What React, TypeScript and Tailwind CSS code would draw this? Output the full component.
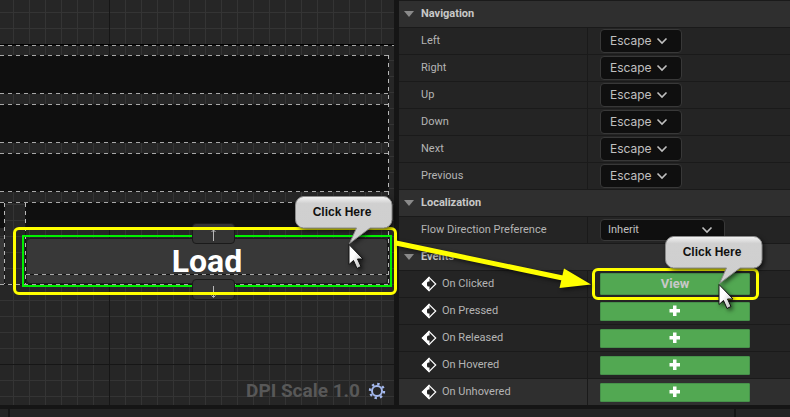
import React from "react";

const dashX =
  "h-px shrink-0 bg-[repeating-linear-gradient(90deg,#a8a8a8_0_4px,#141414_4px_8px)]";
const dashY =
  "w-px shrink-0 bg-[repeating-linear-gradient(180deg,#b8b8b8_0_4px,#141414_4px_8px)]";

const navigation = ["Left", "Right", "Up", "Down", "Next", "Previous"];
const events = ["On Clicked", "On Pressed", "On Released", "On Hovered", "On Unhovered"];

function Chevron() {
  return (
    <svg viewBox="0 0 12 8" className="pointer-events-none h-2 w-3 fill-none stroke-[#c0c0c0] stroke-[1.6]">
      <path d="M1.500 1.500 6 6l4.500-4.500" />
    </svg>
  );
}

function SectionHeader({ title }: { title: string }) {
  return (
    <button
      type="button"
      className="flex h-[27px] w-full items-center gap-[7px] border-b border-[#1a1a1a] bg-[#2f2f2f] pl-[5px] text-left font-bold text-[#c8c8c8]"
    >
      <svg viewBox="0 0 10 6" className="h-1.5 w-2.5 fill-[#8a8a8a]">
        <path d="M0 0h10L5 6z" />
      </svg>
      <span>{title}</span>
    </button>
  );
}

function NavigationRow({ name }: { name: string }) {
  const id = "nav-" + name.toLowerCase();
  return (
    <div className="flex h-[27px] border-b border-[#1a1a1a] bg-[#242424]">
      <label htmlFor={id} className="flex w-[189px] items-center border-r border-[#1a1a1a] pl-[22px]">
        {name}
      </label>
      <div className="flex flex-1 items-center pl-3">
        <div className="grid w-[82px] items-center">
          <select
            id={id}
            className="col-start-1 row-start-1 h-6 appearance-none rounded border border-[#383838] bg-[#0f0f0f] pl-[9px] font-['Inter',sans-serif] text-[12px] text-[#c0c0c0]"
          >
            <option>Escape</option>
          </select>
          <div className="pointer-events-none col-start-1 row-start-1 justify-self-end pr-[14px]">
            <Chevron />
          </div>
        </div>
      </div>
    </div>
  );
}

function EventIcon() {
  return (
    <svg viewBox="0 0 16 16" className="size-4">
      <path d="M8 1.300 14.700 8 8 14.700 1.300 8z" fill="#242424" stroke="#fff" strokeWidth="1.200" />
      <path d="M8.500.500 1 8l7.500 7.500V10.500H7.500a1.500 1.500 0 0 1-1.500-1.500V7a1.500 1.500 0 0 1 1.500-1.500h1z" fill="#fff" />
    </svg>
  );
}

function EventRow({ name, bound, last }: { name: string; bound: boolean; last: boolean }) {
  return (
    <div className={last ? "flex h-[26px] bg-[#2f2f2f]" : "flex h-[27px] border-b border-[#1a1a1a] bg-[#242424]"}>
      <div className="flex w-[189px] items-center gap-[5px] border-r border-[#1a1a1a] pl-[22px]">
        <EventIcon />
        <span>{name}</span>
      </div>
      <div className="flex flex-1 items-center pl-3">
        <button
          type="button"
          aria-label={(bound ? "View " : "Add ") + name}
          className={
            bound
              ? "flex h-[22px] w-[150px] items-center justify-center rounded-[1px] border border-[#46914a] bg-[#52a852] text-[13px] font-bold text-[#c8c8c8]"
              : "flex h-[19px] w-[150px] items-center justify-center rounded-[1px] border border-[#46914a] bg-[#52a852]"
          }
        >
          {bound ? (
            "View"
          ) : (
            <svg viewBox="0 0 12 12" className="size-3 fill-white">
              <path d="M4 .500h3.500V4H11v3.500H7.500V11H4V7.500H.500V4H4z" />
            </svg>
          )}
        </button>
      </div>
    </div>
  );
}

function DetailsPanel() {
  return (
    <section className="border-t border-[#1a1a1a] font-['Roboto',sans-serif] text-[11px] text-[#b4b4b4]">
      <SectionHeader title="Navigation" />
      {navigation.map((n) => (
        <NavigationRow key={n} name={n} />
      ))}
      <SectionHeader title="Localization" />
      <div className="flex h-[27px] border-b border-[#1a1a1a] bg-[#242424]">
        <label htmlFor="flow" className="flex w-[189px] items-center border-r border-[#1a1a1a] pl-[22px]">
          Flow Direction Preference
        </label>
        <div className="flex flex-1 items-center pl-3">
          <div className="grid w-[125px] items-center">
            <select
              id="flow"
              className="col-start-1 row-start-1 h-[22px] appearance-none rounded border border-[#383838] bg-[#0f0f0f] pl-[7px] text-[#c0c0c0]"
            >
              <option>Inherit</option>
            </select>
            <div className="pointer-events-none col-start-1 row-start-1 justify-self-end pr-3">
              <Chevron />
            </div>
          </div>
        </div>
      </div>
      <SectionHeader title="Events" />
      {events.map((n, i) => (
        <EventRow key={n} name={n} bound={i === 0} last={i === events.length - 1} />
      ))}
    </section>
  );
}

function Slot() {
  return (
    <div className="flex h-[39px] flex-col justify-between bg-[#0f0f0f]">
      <div className={dashX} />
      <div className={dashX} />
    </div>
  );
}

function MoveButton({ label, down }: { label: string; down: boolean }) {
  return (
    <button
      type="button"
      aria-label={label}
      className="flex h-[21px] w-[43px] items-center justify-center rounded border border-[#1a1a1a] bg-[#343434]"
    >
      <svg viewBox="0 0 9 18" className="h-[18px] w-[9px] fill-none stroke-[#b8b8b8]">
        {down ? <path d="M4.500 5v11M2.500 14.500l2 2 2-2" /> : <path d="M4.500 16V5M2.500 7l2-2 2 2" />}
      </svg>
    </button>
  );
}

function LoadWidget() {
  return (
    <div className="relative flex h-[46px]">
      <button
        type="button"
        className="flex flex-1 items-center justify-center rounded-sm border border-[#1c1c1c] bg-[#383838] text-[32px] font-bold text-white"
      >
        Load
      </button>
      <div className={dashX + " absolute inset-x-0 bottom-[9px]"} />
      <div className="pointer-events-none absolute -inset-x-1 -inset-y-[3px] border-2 border-[#00f000]" />
      <div className="absolute inset-x-0 -top-[15px] -bottom-4 flex flex-col items-center justify-between pl-3">
        <MoveButton label="Move up" down={false} />
        <MoveButton label="Move down" down={true} />
      </div>
    </div>
  );
}

function Canvas() {
  return (
    <section className="relative flex flex-col overflow-hidden bg-[#262626] font-['Roboto',sans-serif]">
      <div className="absolute inset-0 bg-[linear-gradient(90deg,#343434_1px,transparent_1px),linear-gradient(180deg,#343434_1px,transparent_1px)] bg-[size:16px_16px] bg-[position:13px_12px]" />
      <div className="absolute inset-y-0 left-[109px] w-px bg-[#161616]" />
      <div className="absolute inset-x-0 top-[364px] h-px bg-[#161616]" />

      <div className="relative flex flex-col pt-11">
        <div className="h-px bg-black" />
        <div className={dashX} />
        <div className="mt-[9px] mr-[5px] flex">
          <div className="flex min-w-0 flex-1 flex-col gap-2.5">
            <Slot />
            <Slot />
            <Slot />
            <div className="flex flex-col">
              <div className={dashX} />
              <div className="flex">
                <div className="flex w-1 flex-col gap-2.5">
                  <div className="h-[25px] bg-[#0f0f0f]" />
                  <div className="h-[46px] bg-[#383838]" />
                </div>
                <div className={dashY} />
                <div className="w-5" />
                <div className={dashY} />
                <div className="flex flex-1 flex-col gap-2.5">
                  <div className="h-[25px] bg-[#0f0f0f]" />
                  <LoadWidget />
                </div>
              </div>
              <div className={dashX} />
            </div>
          </div>
          <div className={dashY} />
        </div>
      </div>

      <div className="relative mt-auto flex items-center justify-end gap-2 pr-2 text-[19px] font-bold text-[#585858]">
        <span>DPI Scale 1.0</span>
        <svg viewBox="0 0 18 18" className="size-[18px] fill-none stroke-[#a4b8ec]">
          <circle cx="9" cy="9" r="5" strokeWidth="2" />
          <circle cx="9" cy="9" r="7" strokeWidth="2.400" strokeDasharray="2.400 3.098" />
        </svg>
      </div>
    </section>
  );
}

function Callout({ className }: { className: string }) {
  return (
    <div className={"pointer-events-none absolute grid h-[76px] w-[98px] " + className}>
      <svg
        viewBox="0 0 98 76"
        className="col-start-1 row-start-1 h-[76px] w-[98px] overflow-visible drop-shadow-[2px_2px_2px_rgba(0,0,0,0.6)]"
      >
        <defs>
          <linearGradient id="bubble" x1="0" y1="0" x2="0" y2="1">
            <stop offset="0" stopColor="#f4f4f4" />
            <stop offset="0.150" stopColor="#d0d0d0" />
            <stop offset="1" stopColor="#cfcfcf" />
          </linearGradient>
          <linearGradient id="pointer" x1="0" y1="0" x2="1" y2="1">
            <stop offset="0.400" stopColor="#ffffff" />
            <stop offset="1" stopColor="#b0b0b0" />
          </linearGradient>
        </defs>
        <path
          d="M8.500.500h80a8.500 8.500 0 0 1 8.500 8.500v14.500a8.500 8.500 0 0 1-8.500 8.500H75L54.500 47.500 61.500 32h-53A8.500 8.500 0 0 1 .500 23.500V9A8.500 8.500 0 0 1 8.500.500z"
          fill="url(#bubble)"
          stroke="#8a8a8a"
        />
        <path d="M54 48.500v20l4.500-4 3.500 8 4-2-3.500-7.500h5.500z" fill="url(#pointer)" stroke="#111" />
      </svg>
      <span className="z-10 col-start-1 row-start-1 pt-2 pr-1 text-center font-['Liberation_Sans',sans-serif] text-[12px] leading-4 font-bold text-[#111]">
        Click Here
      </span>
    </div>
  );
}

export default function App() {
  return (
    <div className="relative flex min-h-screen flex-col overflow-hidden bg-[#242424]">
      <main className="grid grid-cols-[minmax(0,1fr)_391px] gap-x-[5px] border-b-4 border-[#151515] bg-[#151515]">
        <Canvas />
        <DetailsPanel />
      </main>
      <footer className="flex flex-1">
        <div className="w-2.5 border-r-2 border-[#151515]" />
        <div className="flex-1" />
        <div className="w-14 border-l-2 border-[#151515]" />
      </footer>

      <div className="pointer-events-none absolute left-[13px] top-[227px] h-[68px] w-[384px] rounded-md border-3 border-[#ffff00]" />
      <div className="pointer-events-none absolute left-[592px] top-[268px] h-8 w-[167px] rounded-md border-3 border-[#ffff00]" />
      <svg
        viewBox="0 0 200 60"
        className="pointer-events-none absolute left-[395px] top-[235px] h-[60px] w-[200px] drop-shadow-[2px_2px_2px_rgba(0,0,0,0.6)]"
      >
        <path d="M1 8 170 43.500" stroke="#ffff00" strokeWidth="5" />
        <path d="M169 33.500 196 49.500 164.500 53z" fill="#ffff00" />
      </svg>
      <Callout className="left-[295px] top-[196px]" />
      <Callout className="left-[665px] top-[236px]" />
    </div>
  );
}
